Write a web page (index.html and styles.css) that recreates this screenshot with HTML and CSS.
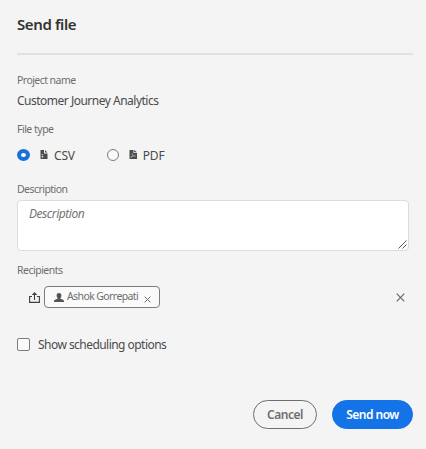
FILE: index.html
```html
<!DOCTYPE html>
<html lang="en">
<head>
<meta charset="utf-8">
<title>Send file</title>
<link rel="stylesheet" href="styles.css">
</head>
<body>
<form class="dialog">
  <h1 class="title"><span>Send file</span></h1>
  <hr class="divider">
  <div class="label name-label"><span>Project name</span></div>
  <div class="value"><span>Customer Journey Analytics</span></div>
  <div class="label type-label"><span>File type</span></div>
  <div class="types">
    <label class="type">
      <span class="radio checked"></span>
      <svg class="file-icon" width="8" height="9" viewBox="0 0 8 9"><path fill="#4b4b4b" d="M.5 0H4v3.500h3.500V9H.5zM5 0l2.500 2.600H5z"/><path fill="#ddd" d="M1.700 4.200h1.500v1H1.700zM1.700 6h1.500v1.500H1.700z"/></svg>
      <span class="type-text">CSV</span>
    </label>
    <label class="type">
      <span class="radio"></span>
      <svg class="file-icon" width="8" height="9" viewBox="0 0 8 9"><path fill="#4b4b4b" d="M.5 0H4.500v3H8V9H.5zM5.200 0L8 2.300H5.200z"/><path fill="none" stroke="#bbb" stroke-width=".6" d="M1.700 7.500C3 6.500 3.500 5 3.300 3.400c.4 1.700 1.500 2.600 3.200 2.600-1.700 0-3.200.3-4.800 1.500"/></svg>
      <span class="type-text">PDF</span>
    </label>
  </div>
  <div class="label description-label"><span>Description</span></div>
  <div class="textarea">
    <span class="placeholder">Description</span>
    <svg class="grip" width="9" height="9" viewBox="0 0 9 9"><path stroke="#444" stroke-width=".9" d="M.5 8.500l8-8M4.500 8.500l4-4"/></svg>
  </div>
  <div class="label recipients-label"><span>Recipients</span></div>
  <div class="recipients">
    <svg class="share" width="11" height="11" viewBox="0 0 11 11"><path fill="none" stroke="#3f3f3f" stroke-width="1.100" d="M3 4.500H.6v5.900h9.800V4.500H8M5.500 8V2"/><path fill="#3f3f3f" d="M5.500 0L8.200 3H2.800z"/></svg>
    <div class="tag">
      <svg class="person" width="10" height="9" viewBox="0 0 10 9"><path fill="#555" d="M5 0c1.600 0 2.400 1.100 2.400 2.500 0 1.200-.4 2.100-1 2.700v.6C8.500 6.300 10 6.900 10 8.200V9H0v-.8c0-1.300 1.500-1.900 3.600-2.400v-.6c-.6-.6-1-1.500-1-2.700C2.600 1.100 3.400 0 5 0z"/></svg>
      <span class="tag-text">Ashok Gorrepati</span>
      <svg class="tag-close" width="7" height="7" viewBox="0 0 7 7"><path stroke="#6e6e6e" d="M.6.6l5.800 5.800M6.400.6L.6 6.400"/></svg>
    </div>
    <svg class="clear" width="9" height="9" viewBox="0 0 9 9"><path stroke="#666" stroke-width="1.200" d="M.7.7l7.600 7.600M8.300.7L.7 8.300"/></svg>
  </div>
  <label class="schedule"><span class="checkbox"></span><span class="schedule-text">Show scheduling options</span></label>
  <div class="actions">
    <button type="button" class="button cancel"><span>Cancel</span></button>
    <button type="button" class="button send"><span>Send now</span></button>
  </div>
</form>
</body>
</html>
```
FILE: styles.css
```css
* { box-sizing: border-box; }
body {
  margin: 0;
  background: #f4f4f4;
  color: #4b4b4b;
  font-family: "Noto Sans", "Open Sans", sans-serif;
  font-size: 12px;
}
svg { display: block; flex: none; }
.dialog {
  display: flex;
  flex-direction: column;
  width: 426px;
  height: 449px;
  padding: 14px 13px 0 17px;
}
.title { margin: 0; height: 20px; line-height: 20px; font-size: 15px; font-weight: 600; color: #323232; letter-spacing: -.4px; }
.divider { width: 100%; height: 2px; margin: 19px 0 0; border: 0; background: #e1e1e1; }
.label { height: 16px; line-height: 16px; font-size: 10.5px; letter-spacing: -.5px; color: #6e6e6e; }
.name-label { margin-top: 17px; letter-spacing: -.6px; }
.name-label, .description-label { letter-spacing: -.55px; }
.value { height: 18px; line-height: 18px; margin-top: 4px; letter-spacing: -.5px; }
.type-label { margin-top: 11px; }
.types { display: flex; height: 18px; margin-top: 10px; gap: 32px; }
.type { display: flex; align-items: center; }
.radio { width: 12px; height: 12px; margin-top: -2px; border: 1px solid #7c7c7c; border-radius: 50%; background: #f9f9f9; }
.checked { width: 13px; height: 12px; border: 4px solid #1b6fdb; background: #fff; }
.file-icon { margin: -3px 6px 0 10px; }
.type-text { line-height: 18px; letter-spacing: -.2px; }
.description-label { margin-top: 16px; }
.textarea { position: relative; width: 392px; height: 51px; margin-top: 3px; padding: 4px 11px; border: 1px solid #dcdcdc; border-radius: 4px; background: #fff; }
.placeholder { display: block; line-height: 18px; font-style: italic; color: #747474; letter-spacing: -.45px; }
.grip { position: absolute; right: 1px; bottom: 1px; }
.recipients-label { margin-top: 11px; }
.recipients { display: flex; align-items: center; height: 22px; margin-top: 8px; padding: 0 8px 0 12px; }
.share { margin: 1px 4px 0 0; }
.tag { display: flex; align-items: center; width: 116px; height: 22px; padding-left: 9px; border: 1px solid #7c7c7c; border-radius: 4px; background: #fafafa; }
.tag-text { width: 72px; margin: -2px 0 0 3px; line-height: 18px; font-size: 10.5px; letter-spacing: -.6px; color: #6e6e6e; white-space: nowrap; }
.tag-close { margin: 4px 0 0 5px; }
.clear { margin-left: auto; }
.schedule { display: flex; align-items: center; height: 18px; margin-top: 28px; }
.checkbox { width: 13px; height: 13px; margin-top: -1px; border: 1px solid #7c7c7c; border-radius: 2px; background: #fafafa; }
.schedule-text { margin-left: 8px; line-height: 18px; letter-spacing: -.54px; }
.actions { display: flex; justify-content: flex-end; gap: 15px; margin-top: 46px; }
.button { height: 29px; padding: 0; border: 1px solid #6e6e6e; border-radius: 15px; background: transparent; font: 600 12px/18px "Noto Sans", sans-serif; letter-spacing: -.5px; color: #6e6e6e; }
.cancel { width: 64px; }
.send { width: 81px; border-color: #1473e6; background: #1473e6; color: #fff; }
```
